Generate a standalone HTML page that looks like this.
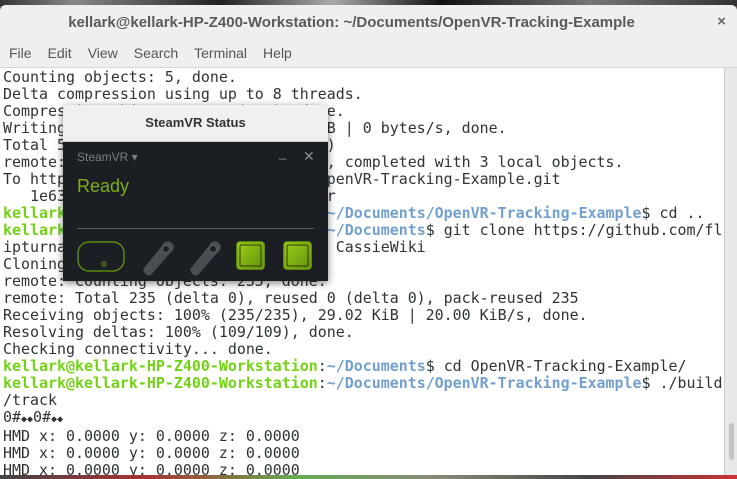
<!DOCTYPE html>
<html><head><meta charset="utf-8"><style>
body{margin:0;width:737px;height:479px;overflow:hidden;background:#5a4a3a;position:relative;font-family:"Liberation Sans",sans-serif}
.bgtop{position:absolute;left:0;top:0;width:737px;height:6px;background:linear-gradient(90deg,#333 0,#888 10%,#222 30%,#aaa 45%,#111 60%,#777 80%,#333 100%)}
.bgbot{position:absolute;left:0;top:474px;width:737px;height:5px;background:linear-gradient(90deg,#444,#a33 20%,#6a5 40%,#887 60%,#444 80%,#c33)}
.win{position:absolute;left:0;top:5px;width:737px;height:470px;background:#fff;border-radius:6px 6px 0 0;overflow:hidden}
.title{height:35px;background:#efefef;text-align:center;line-height:35px;font-size:15px;font-weight:bold;color:#5a5a5a;padding-right:34px}
.x{position:absolute;right:11px;top:0;line-height:33px;color:#666;font-size:15px;font-weight:bold}
.menu{height:27px;background:#efefef;border-bottom:1px solid #d6d6d6;font-size:14px;color:#555;line-height:26px;padding-left:9px}
.menu span{margin-right:16px}
.term{position:absolute;left:3px;top:64px;font-family:"DejaVu Sans Mono",monospace;font-size:14.95px;line-height:17px;color:#2e3436;white-space:pre}
.g{color:#73d216;font-weight:bold}.b{color:#729fcf;font-weight:bold}
.sb{position:absolute;left:724px;top:63px;width:13px;height:407px;background:#e8e8e8;border-left:1px solid #ccc}
.th{position:absolute;left:4px;top:355px;width:5px;height:37px;background:#c5c5c5;border-radius:3px}
.pop{position:absolute;left:63px;top:105px;width:265px;height:176px;box-shadow:0 2px 8px rgba(0,0,0,.5);border-radius:5px 5px 0 0;overflow:hidden}
.pt{height:36px;background:#f0f0f0;text-align:center;line-height:36px;font-weight:bold;font-size:13px;color:#333;border-bottom:1px solid #ccc}
.pb{position:absolute;top:37px;left:0;width:265px;height:139px;background:#1b1e22}
</style></head><body>
<div class="bgtop"></div><div class="bgbot"></div>
<div class="win">
<div class="title">kellark@kellark-HP-Z400-Workstation: ~/Documents/OpenVR-Tracking-Example</div>
<div class="x">×</div>
<div class="menu"><span>File</span><span>Edit</span><span>View</span><span>Search</span><span>Terminal</span><span>Help</span></div>
<div class="term">Counting objects: 5, done.
Delta compression using up to 8 threads.
Compressing objects: 100% (5/5), done.
Writing objects: 100% (5/5), 1.24 KiB | 0 bytes/s, done.
Total 5 (delta 3), reused 0 (delta 0)
remote: Resolving deltas: 100% (3/3), completed with 3 local objects.
To https://github.com/kellarkrobot/OpenVR-Tracking-Example.git
   1e63abc..9f1d2e3  master -> master
<span class="g">kellark@kellark-HP-Z400-Workstation</span>:<span class="b">~/Documents/OpenVR-Tracking-Example</span>$ cd ..
<span class="g">kellark@kellark-HP-Z400-Workstation</span>:<span class="b">~/Documents</span>$ git clone https://github.com/fl
ipturnabout/CassieWiki.git           CassieWiki
Cloning into 'CassieWiki'...
remote: Counting objects: 235, done.
remote: Total 235 (delta 0), reused 0 (delta 0), pack-reused 235
Receiving objects: 100% (235/235), 29.02 KiB | 20.00 KiB/s, done.
Resolving deltas: 100% (109/109), done.
Checking connectivity... done.
<span class="g">kellark@kellark-HP-Z400-Workstation</span>:<span class="b">~/Documents</span>$ cd OpenVR-Tracking-Example/
<span class="g">kellark@kellark-HP-Z400-Workstation</span>:<span class="b">~/Documents/OpenVR-Tracking-Example</span>$ ./build
/track
0#<span style="font-size:10px">◆◆</span>0#<span style="font-size:10px">◆◆</span>
HMD x: 0.0000 y: 0.0000 z: 0.0000
HMD x: 0.0000 y: 0.0000 z: 0.0000
HMD x: 0.0000 y: 0.0000 z: 0.0000</div>
<div class="sb"><div class="th"></div></div>
</div>
<div class="pop">
<div class="pt">SteamVR Status</div>
<div class="pb">
<div style="position:absolute;left:14px;top:8px;font-size:12px;color:#7a7e84">SteamVR ▾</div>
<div style="position:absolute;left:216px;top:3px;font-size:13px;color:#8a8e94">_</div>
<div style="position:absolute;left:240px;top:6px;font-size:14px;color:#8a8e94">✕</div>
<div style="position:absolute;left:14px;top:34px;font-size:18px;color:#7fae14">Ready</div>
<div style="position:absolute;left:14px;top:86px;width:237px;height:1px;background:#55595e"></div>
<svg style="position:absolute;left:0;top:90px" width="265" height="49">
<rect x="15" y="10" width="46" height="29" rx="11" fill="none" stroke="#5c8a0e" stroke-width="1.5"/>
<circle cx="41" cy="32" r="2" fill="none" stroke="#5c8a0e" stroke-width="1.2"/>
<g fill="#4a4d51"><path d="M80 37 L99 14 A6 6 0 1 1 107 21 L88 43 Q82 45 80 37Z"/><circle cx="103" cy="17" r="3.5" fill="#1b1e22" stroke="#5d6064"/>
<path d="M127 37 L146 14 A6 6 0 1 1 154 21 L135 43 Q129 45 127 37Z"/><circle cx="150" cy="17" r="3.5" fill="#1b1e22" stroke="#5d6064"/></g>
<defs><linearGradient id="gg" x1="0" y1="0" x2="1" y2="1"><stop offset="0" stop-color="#9fd11a"/><stop offset="1" stop-color="#5f8f0a"/></linearGradient></defs>
<rect x="174" y="10" width="27" height="27" rx="3" fill="url(#gg)" stroke="#76a80f" stroke-width="1.5"/>
<rect x="177" y="13" width="21" height="21" rx="1" fill="none" stroke="#2b3a08" stroke-width="1"/>
<rect x="221" y="10" width="27" height="27" rx="3" fill="url(#gg)" stroke="#76a80f" stroke-width="1.5"/>
<rect x="224" y="13" width="21" height="21" rx="1" fill="none" stroke="#2b3a08" stroke-width="1"/>
</svg>
</div></div>
</body></html>
